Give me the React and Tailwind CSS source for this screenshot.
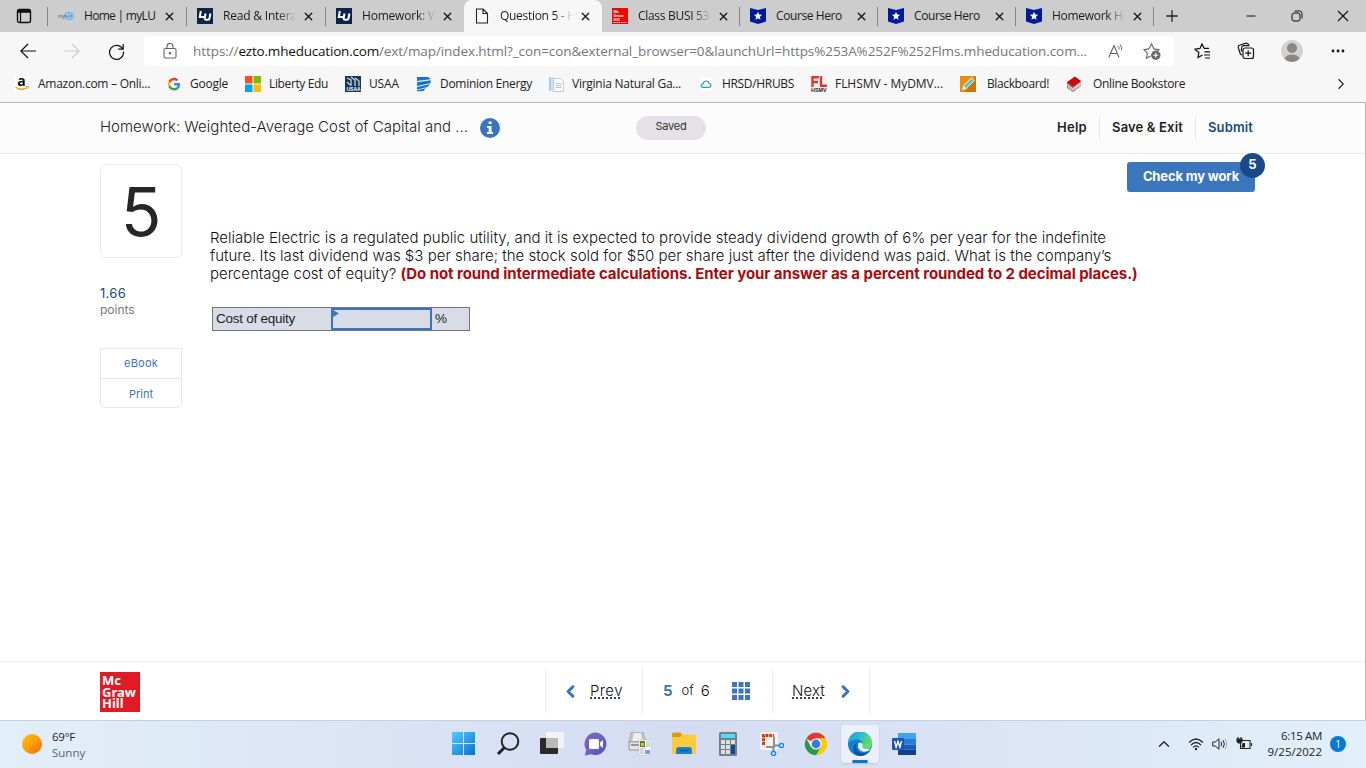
import React from "react";
import { X, Plus, Minus, ChevronRight, ChevronLeft, ChevronUp } from "lucide-react";

const tabs = [
  { title: "Home | myLU", icon: "mylu", width: "w-[139px]", text: "tracking-[-0.7px]", separator: true },
  { title: "Read & Intera", icon: "lu", width: "w-[139px]", text: "tracking-[-0.2px]", fade: true, separator: true },
  { title: "Homework: W", icon: "lu", width: "w-[138px]", text: "tracking-[-0.2px]", fade: true },
  { title: "Question 5 - H", icon: "page", width: "w-[138px]", text: "tracking-[-0.3px]", fade: true, active: true },
  { title: "Class BUSI 530", icon: "mgh", width: "w-[138px]", text: "tracking-[-0.3px]", fade: true, separator: true },
  { title: "Course Hero", icon: "hero", width: "w-[138px]", text: "tracking-[-0.4px]", separator: true },
  { title: "Course Hero", icon: "hero", width: "w-[138px]", text: "tracking-[-0.4px]", separator: true },
  { title: "Homework He", icon: "hero", width: "w-[138px]", text: "tracking-[-0.3px]", fade: true, separator: true },
];

const bookmarks = [
  { title: "Amazon.com – Onli...", icon: "amazon", width: "w-[152px] gap-2", text: "tracking-[-0.26px]" },
  { title: "Google", icon: "google", width: "w-[79px] gap-2", text: "tracking-[-0.24px]" },
  { title: "Liberty Edu", icon: "microsoft", width: "w-[100px] gap-2", text: "tracking-[-0.37px]" },
  { title: "USAA", icon: "usaa", width: "w-[71px] gap-2", text: "tracking-[-0.13px]" },
  { title: "Dominion Energy", icon: "dominion", width: "w-[132px] gap-2", text: "tracking-[-0.29px]" },
  { title: "Virginia Natural Ga...", icon: "vng", width: "w-[150px] gap-2", text: "tracking-[-0.26px]" },
  { title: "HRSD/HRUBS", icon: "cloud", width: "w-[113px] gap-2", text: "tracking-[-0.33px]" },
  { title: "FLHSMV - MyDMV...", icon: "fl", width: "w-[149px] gap-2", text: "tracking-[-0.05px]" },
  { title: "Blackboard!", icon: "pencil", width: "w-[106px] gap-[11px]", text: "tracking-[-0.38px]" },
  { title: "Online Bookstore", icon: "book", width: "w-[130px] gap-[11px]", text: "tracking-[-0.33px]" },
];

function SiteIcon({ name }) {
  switch (name) {
    case "mylu":
      return (
        <svg width="16" height="16" viewBox="0 0 16 16">
          <ellipse cx="11" cy="8" rx="4.7" ry="3.4" fill="#a9cdf0" stroke="#5b9bd8" strokeWidth="0.8" />
          <path d="M8 9V6.500M8 9h2M11 6.500v2q1.500 1.500 2.500 0v-2" fill="none" stroke="#3f86cc" strokeWidth="1" />
          <text x="0" y="10" fontSize="5" fontFamily="Liberation Sans, sans-serif" fill="#555">my</text>
        </svg>
      );
    case "lu":
      return (
        <svg width="16" height="16" viewBox="0 0 16 16">
          <rect width="16" height="16" fill="#0f2349" />
          <path d="M3.800 3L2.800 9H7.500M8.500 5.500L7.700 10q-.1 1.800 1.500 1.800h1.500q1.600 0 1.900-1.800l.8-4.500" fill="none" stroke="#fff" strokeWidth="2" />
        </svg>
      );
    case "page":
      return (
        <svg width="16" height="16" viewBox="0 0 16 16">
          <path d="M2.500 1v14h11V5.500L9 1zM9 1v4.500h4.500" fill="none" stroke="#222" strokeWidth="1.100" strokeLinejoin="round" />
        </svg>
      );
    case "mgh":
      return (
        <svg width="16" height="16" viewBox="0 0 16 16">
          <rect width="16" height="16" fill="#f00505" />
          <g fill="#fff" fontSize="4" fontWeight="700" fontFamily="Liberation Sans, sans-serif">
            <text x="1.500" y="4.500">Mc</text>
            <text x="1.500" y="8.500">Graw</text>
            <text x="1.500" y="12.500">Hill</text>
          </g>
          <path d="M1.500 14.500h13" stroke="#fff" strokeDasharray="1.200 .6" />
        </svg>
      );
    case "hero":
      return (
        <svg width="16" height="16" viewBox="0 0 16 16">
          <path d="M0 0l8 2 8-2v13.500L8 16 0 13.500z" fill="#001a9c" />
          <path d="M8 3.800l1.200 2.700 2.900.3-2.200 2 .6 2.900L8 10.200l-2.500 1.500.6-2.900-2.200-2 2.900-.3z" fill="#fff" />
        </svg>
      );
    case "amazon":
      return (
        <svg width="16" height="16" viewBox="0 0 16 16">
          <rect width="16" height="16" rx="2" fill="#fff" />
          <text x="3.300" y="10" fontSize="14" fontWeight="700" fontFamily="Open Sans, sans-serif" fill="#111">a</text>
          <path d="M1.500 11q6 4.500 11.500.5" fill="none" stroke="#f90" strokeWidth="1.500" />
          <path d="M11.500 10.500l3-.2-.7 2.700" fill="none" stroke="#f90" strokeWidth="1" />
        </svg>
      );
    case "google":
      return (
        <svg width="16" height="16" viewBox="0 0 48 48">
          <circle cx="24" cy="24" r="24" fill="#fff" />
          <g transform="translate(5 5) scale(.8)">
            <path fill="#EA4335" d="M24 9.500c3.540 0 6.710 1.220 9.210 3.600l6.850-6.850C35.900 2.380 30.470 0 24 0 14.620 0 6.510 5.380 2.560 13.220l7.980 6.190C12.430 13.720 17.740 9.500 24 9.500z" />
            <path fill="#4285F4" d="M46.980 24.550c0-1.570-.15-3.090-.38-4.550H24v9.020h12.940c-.58 2.960-2.260 5.480-4.780 7.180l7.730 6c4.510-4.180 7.090-10.360 7.090-17.650z" />
            <path fill="#FBBC05" d="M10.530 28.590c-.48-1.450-.76-2.990-.76-4.590s.27-3.140.76-4.590l-7.980-6.190C.92 16.460 0 20.120 0 24c0 3.880.92 7.540 2.560 10.780l7.970-6.190z" />
            <path fill="#34A853" d="M24 48c6.480 0 11.930-2.130 15.890-5.810l-7.730-6c-2.150 1.450-4.920 2.300-8.160 2.300-6.260 0-11.570-4.220-13.470-9.910l-7.980 6.190C6.510 42.620 14.620 48 24 48z" />
          </g>
        </svg>
      );
    case "microsoft":
      return (
        <svg width="16" height="16" viewBox="0 0 16 16">
          <path d="M0 0h7.500v7.500H0z" fill="#f25022" />
          <path d="M8.500 0H16v7.500H8.500z" fill="#7fba00" />
          <path d="M0 8.500h7.500V16H0z" fill="#00a4ef" />
          <path d="M8.500 8.500H16V16H8.500z" fill="#ffb900" />
        </svg>
      );
    case "usaa":
      return (
        <svg width="16" height="16" viewBox="0 0 16 16">
          <rect width="16" height="16" fill="#12395b" />
          <path d="M2 2l4 2v6M6 1l4 3v6M10 2l4 3v5M2 6l3 3" stroke="#c8d4de" strokeWidth="1.300" fill="none" />
          <text x="1.500" y="15" fontSize="5" fontWeight="700" fontFamily="Liberation Sans, sans-serif" fill="#fff">USAA</text>
        </svg>
      );
    case "dominion":
      return (
        <svg width="16" height="16" viewBox="0 0 16 16" fill="#1673d1">
          <path d="M1 1h11q2 1 2.500 2.300L1 5z" />
          <path d="M1 6.300l13.800-2q.2 1.800-.5 3L1 10z" />
          <path d="M1 11l12.800-2.800q-1 2-3 3L1 13.500z" />
          <path d="M1 14.300l9-2q-2 3-5 3H1z" />
        </svg>
      );
    case "vng":
      return (
        <svg width="16" height="16" viewBox="0 0 16 16">
          <path d="M1 1h6v14H1z" fill="#cfe6f7" />
          <path d="M1 1h2v14H1z" fill="#a5cdea" />
          <path d="M5.500 2.500h7l3 3v10h-10z" fill="#fff" stroke="#b5bcc4" strokeWidth=".8" />
          <path d="M7.500 7.500h6M7.500 9.500h6M7.500 11.500h6" stroke="#b2bac2" strokeWidth=".9" />
        </svg>
      );
    case "cloud":
      return (
        <svg width="16" height="16" viewBox="0 0 16 16">
          <rect x="2" y="2" width="12" height="12" fill="#fff" />
          <path d="M5 11.300q-2 0-2-1.700t2-1.800Q5.500 5 8 5t3 2.500q2 .3 2 2t-2 1.800z" fill="none" stroke="#2b9ab9" strokeWidth="1.200" />
        </svg>
      );
    case "fl":
      return (
        <svg width="16" height="16" viewBox="0 0 16 16">
          <path d="M1.500 11V1.200H8M1.500 6H7M10 0v9.800h6" fill="none" stroke="#d93a2b" strokeWidth="2.400" />
          <text x="0" y="16" fontSize="5.400" fontWeight="700" fontFamily="Liberation Sans, sans-serif" fill="#222">HSMV</text>
        </svg>
      );
    case "pencil":
      return (
        <svg width="16" height="16" viewBox="0 0 16 16">
          <rect width="16" height="16" fill="#f08a12" />
          <path d="M16 0v16H5z" fill="#cf7208" />
          <path d="M2.500 13.500l1-4 8-8 3 3-8 8z" fill="#7fd8d4" stroke="#fff" strokeWidth=".5" />
          <path d="M2.500 13.500l1-3.500L6 12.500z" fill="#fff3cf" />
          <path d="M5 11l7.500-7.500" stroke="#2e9d98" strokeWidth=".8" />
        </svg>
      );
    case "book":
      return (
        <svg width="16" height="16" viewBox="0 0 16 16">
          <path d="M1 8l7 4 7-5v3l-8 6-6-4z" fill="#8d8d8d" />
          <path d="M2 9l5 3.500L15 8M2 11l5 3 7.500-5" fill="none" stroke="#eee" strokeWidth=".9" />
          <path d="M1 6l8-5.500 6 4.500-8 6z" fill="#cc0c0c" />
          <path d="M1 6v1.300l6 4.500 8-6V5l-8 6z" fill="#a80808" />
        </svg>
      );
    default:
      return null;
  }
}

function TabStrip() {
  return (
    <div className="flex h-8 bg-[#cdcdcd]">
      <div className="flex w-12 items-center justify-end">
        <svg className="mr-[15px]" width="16" height="16" viewBox="0 0 16 16" fill="none" stroke="#111">
          <rect x="1.500" y="1.500" width="13" height="13" rx="2" strokeWidth="1.400" />
          <path d="M1.500 3.300h13" strokeWidth="3" />
          <path d="M4.500 4v10" strokeWidth="1.200" />
        </svg>
        <span className="h-[19px] w-px bg-[#858585]" />
      </div>
      {tabs.map((tab, index) => (
        <div
          key={index}
          className={`flex shrink-0 items-center pl-2.5 ${tab.width} ${
            tab.active ? "rounded-t-lg bg-[#f7f7f7]" : ""
          }`}
        >
          <span className="w-4 shrink-0">
            <SiteIcon name={tab.icon} />
          </span>
          <span
            className={`ml-2.5 w-[73px] overflow-hidden whitespace-nowrap text-xs text-[#1b1b1b] ${tab.text} ${
              tab.fade ? "[mask-image:linear-gradient(to_right,black_75%,transparent)]" : ""
            }`}
          >
            {tab.title}
          </span>
          <X className="ml-1.5 shrink-0 text-[#111]" size={13} strokeWidth={2.400} />
          {tab.separator && <span className="ml-auto h-[19px] w-px bg-[#858585]" />}
        </div>
      ))}
      <Plus className="ml-[9px] mt-[7px] text-[#222]" size={18} strokeWidth={1.700} />
      <div className="ml-auto flex items-center gap-[33px] pr-4 text-[#111]">
        <Minus size={14} strokeWidth={1.800} />
        <svg width="12" height="12" viewBox="0 0 12 12" fill="none" stroke="#111">
          <rect x="1" y="3" width="8" height="8" rx="2" />
          <path d="M3.500 1H8.500q2.500 0 2.500 2.500V8.500" />
        </svg>
        <svg width="14" height="14" viewBox="0 0 14 14" stroke="#111" strokeWidth="1.100">
          <path d="M2 2l10 10M12 2L2 12" />
        </svg>
      </div>
    </div>
  );
}

function AddressRow() {
  return (
    <div className="flex h-[38px] items-center">
      <svg className="ml-5" width="16" height="16" viewBox="0 0 16 16" fill="none" stroke="#111" strokeWidth="1.200">
        <path d="M16 8H.8M8 1L.8 8 8 15" />
      </svg>
      <svg className="ml-7" width="16" height="16" viewBox="0 0 16 16" fill="none" stroke="#ccc" strokeWidth="1.200">
        <path d="M0 8h15.200M8 1l7.200 7L8 15" />
      </svg>
      <svg className="ml-7" width="17" height="17" viewBox="0 0 17 17" fill="none" stroke="#111" strokeWidth="1.200">
        <path d="M14.800 6.200A7 7 0 1 0 15.500 8.500M15.200 1v5.200h-5" />
      </svg>
      <div className="ml-[19px] flex h-[30px] w-[1030px] items-center rounded bg-white">
        <svg className="ml-[19px]" width="14" height="16" viewBox="0 0 14 16" fill="none" stroke="#666" strokeWidth="1.100">
          <rect x="1" y="5.500" width="12" height="9.500" rx="1.500" />
          <path d="M4 5.500V3.500a3 3 0 0 1 6 0v2" />
          <circle cx="7" cy="10.200" r=".7" fill="#555" />
        </svg>
        <div className="ml-4 w-[900px] whitespace-nowrap text-[13.500px] text-[#767676]">
          <span className="tracking-[-0.07px]">https://</span>
          <span className="tracking-[-0.2px] text-[#111]">ezto.mheducation.com</span>
          <span className="tracking-[-0.09px]">/ext/map/index.html?_con=con&amp;external_browser=0&amp;launchUrl=https%253A%252F%252Flms.mheducation.com...</span>
        </div>
        <svg className="ml-[15px]" width="16" height="16" viewBox="0 0 16 16" fill="none" stroke="#666">
          <path d="M.8 14.500L6 2.500l5 12M2.500 10.500h7" strokeWidth="1.100" />
          <path d="M10 3q1.500 1.500 1 3.500M12 1.500q2.500 2.500 1.500 6" strokeWidth="1" />
        </svg>
        <svg className="ml-[19px]" width="18" height="18" viewBox="0 0 18 18" fill="none" stroke="#666">
          <path d="M7.500 14L3.500 16.200l.8-5L1 7.700l4.800-.8L8.500 2l2.500 4.900 5 .8-1.200 1.500" strokeWidth="1.100" />
          <circle cx="12.800" cy="13.200" r="4.700" fill="#666" stroke="none" />
          <path d="M12.800 10.700v5M10.300 13.200h5" stroke="#fff" strokeWidth="1.100" />
        </svg>
      </div>
      <svg className="ml-5" width="17" height="17" viewBox="0 0 17 17" fill="none" stroke="#111" strokeWidth="1.200">
        <path d="M8.500 12L4 14.500l.9-5L1 6.200l5-.8L7.900 1l2.300 4.400H15M10.500 8.800h5.500M10 12h6M11 15h5" />
      </svg>
      <svg className="ml-[26px]" width="18" height="18" viewBox="0 0 18 18" fill="none" stroke="#111" strokeWidth="1.200">
        <rect x="6" y="6" width="10.500" height="10.500" rx="2" />
        <path d="M11.200 8.200v6M8.200 11.200h6M5 13Q3.500 13 3 11L1.200 5.500Q1 3.500 3 3L9 1.200Q11 1 12 3.500M4.500 9.500V6q0-2 2-2.300h6" />
      </svg>
      <svg className="ml-[26px]" width="22" height="22" viewBox="0 0 22 22">
        <circle cx="11" cy="11" r="11" fill="#d4d2d0" />
        <circle cx="11" cy="8" r="5" fill="#8a8886" />
        <path d="M3.500 19q1-4.500 7.500-4.500t7.500 4.500a11 11 0 0 1-15 0z" fill="#8a8886" />
      </svg>
      <svg className="ml-7" width="14" height="4" viewBox="0 0 14 4" fill="#111">
        <circle cx="2" cy="2" r="1.400" />
        <circle cx="7" cy="2" r="1.400" />
        <circle cx="12" cy="2" r="1.400" />
      </svg>
    </div>
  );
}

function BookmarksBar() {
  return (
    <div className="flex h-[33px] items-center border-b border-[#b8b8b8] pb-1 pl-3.5">
      {bookmarks.map((item) => (
        <div key={item.title} className={`flex shrink-0 items-center ${item.width}`}>
          <SiteIcon name={item.icon} />
          <span className={`whitespace-nowrap text-xs text-[#222] ${item.text}`}>{item.title}</span>
        </div>
      ))}
      <ChevronRight className="ml-auto mr-4 text-[#222]" size={18} strokeWidth={1.500} />
    </div>
  );
}

function AssignmentHeader() {
  return (
    <header className="flex h-[51px] items-center border-b border-[#e8e8e8] bg-[#fcfcfc] pl-[100px] pb-px">
      <h1 className="w-[380px] whitespace-nowrap text-[15px] font-light tracking-[0.01px] text-[#222]">
        Homework: Weighted-Average Cost of Capital and ...
      </h1>
      <svg width="20" height="20" viewBox="0 0 20 20">
        <circle cx="10" cy="10" r="10" fill="#3a76bb" />
        <path d="M8.700 3.500h2.800V6H8.700zM7 8h4.500v6H13v2H7v-2h1.700v-4H7z" fill="#fff" />
      </svg>
      <div className="ml-[136px] flex h-6 w-[70px] items-center justify-center rounded-full bg-[#e4e2e6] pb-0.5 text-[11px] tracking-[-0.2px] text-[#333]">
        Saved
      </div>
      <nav className="ml-auto mr-[112px] flex items-center text-[13px] font-semibold text-[#1f1f1f]">
        <span className="tracking-[0.27px]">Help</span>
        <span className="ml-3 mr-3 h-5 w-px bg-[#e5e5e5]" />
        <span className="tracking-[0.16px]">Save &amp; Exit</span>
        <span className="ml-3 mr-3 h-5 w-px bg-[#e5e5e5]" />
        <span className="tracking-[0.13px] text-[#174a86]">Submit</span>
      </nav>
    </header>
  );
}

function Sidebar() {
  return (
    <aside className="w-[82px] pt-2.5 text-[#333]">
      <div className="flex h-[94px] items-center justify-center rounded-md border border-[#eaeaea] text-[67px] leading-none text-[#262626]">
        5
      </div>
      <div className="mt-[27px] text-[13px] leading-[17px] tracking-[0.29px] text-[#174a86]">1.66</div>
      <div className="text-xs leading-4 text-[#777]">points</div>
      <div className="mt-[30px] h-[60px] rounded-b-md border border-[#e6e6e6] text-center text-[11px] text-[#3a76bb]">
        <div className="flex h-[30px] items-center justify-center border-b border-[#e6e6e6] tracking-[0.23px]">eBook</div>
        <div className="flex h-[30px] items-center justify-center">Print</div>
      </div>
    </aside>
  );
}

function Question() {
  return (
    <section className="ml-7 w-[1045px]">
      <div className="flex h-[75px] justify-end pt-2">
        <button className="relative flex h-[30px] w-32 items-center justify-center rounded-[3px] bg-[#3a76bb] text-[13px] font-bold text-white">
          <span className="tracking-[-0.15px]">Check my work</span>
          <span className="absolute -right-2.5 -top-[9px] flex h-[25px] w-[25px] items-center justify-center rounded-full bg-[#174a86] pb-0.5">
            5
          </span>
        </button>
      </div>
      <p className="whitespace-nowrap text-[15px] font-light leading-[18px] text-[#111]">
        <span className="tracking-[0.024px]">
          Reliable Electric is a regulated public utility, and it is expected to provide steady dividend growth of 6% per year for the indefinite
        </span>
        <br />
        future. Its last dividend was $3 per share; the stock sold for $50 per share just after the dividend was paid. What is the company’s
        <br />
        percentage cost of equity?{" "}
        <span className="font-bold tracking-[-0.069px] text-[#a90b0f]">
          (Do not round intermediate calculations. Enter your answer as a percent rounded to 2 decimal places.)
        </span>
      </p>
      <div className="ml-0.5 mt-6 flex h-6 w-[258px] border border-[#757575] bg-[#d8dce6] font-['Liberation_Sans',Arial,sans-serif] text-[13.500px] text-[#222]">
        <div className="flex w-[118px] items-center pl-[3px] tracking-[-0.25px]">Cost of equity</div>
        <div className="w-[101px] border-2 border-[#3a76bb]">
          <svg width="6" height="7" viewBox="0 0 6 7">
            <path d="M0 0l6 3.500L0 7z" fill="#3a76bb" />
          </svg>
        </div>
        <div className="flex items-center pl-[3px]">%</div>
      </div>
    </section>
  );
}

function Pager() {
  return (
    <footer className="flex h-[59px] border-t border-[#eee] pl-[100px]">
      <div className="mt-2.5 h-10 w-10 bg-[#e21a23] pl-[2px] pt-[3px] font-['Noto_Sans','Open_Sans',sans-serif] text-[13px] font-bold leading-[11.500px] text-white">
        <div>Mc</div>
        <div>Graw</div>
        <div>Hill</div>
      </div>
      <div className="ml-[405px] mt-1.5 flex h-[46px] text-[15px] font-light text-[#111]">
        <div className="flex w-[97px] items-center border-l border-[#eee] pl-[15px]">
          <ChevronLeft size={19} strokeWidth={4} className="text-[#3a76bb]" />
          <span className="ml-2.5 tracking-[0.4px] underline decoration-[#444] decoration-dotted decoration-2 underline-offset-2">Prev</span>
        </div>
        <div className="flex w-[130px] items-center border-l border-[#eee] pl-5">
          <b className="font-bold text-[#3a76bb]">5</b>
          <span className="ml-[9px] text-[13px]">of</span>
          <span className="ml-[7px]">6</span>
          <svg className="ml-[22px]" width="18" height="18" viewBox="0 0 18 18" fill="#3a76bb">
            <path d="M0 0h5v5H0zM6.500 0h5v5h-5zM13 0h5v5h-5zM0 6.500h5v5H0zM6.500 6.500h5v5h-5zM13 6.500h5v5h-5zM0 13h5v5H0zM6.500 13h5v5h-5zM13 13h5v5h-5z" />
          </svg>
        </div>
        <div className="flex w-[98px] items-center border-x border-[#eee] pl-[19px]">
          <span className="mr-[11px] tracking-[0.14px] underline decoration-[#444] decoration-dotted decoration-2 underline-offset-2">Next</span>
          <ChevronRight size={19} strokeWidth={4} className="text-[#3a76bb]" />
        </div>
      </div>
    </footer>
  );
}

const apps = ["start", "search", "taskview", "chat", "scanner", "files", "calculator", "snip", "chrome", "edge", "word"];

function AppIcon({ name }) {
  return (
    <svg width="24" height="24" viewBox="0 0 24 24">
      {name === "start" && (
        <>
          <defs>
            <linearGradient id="start" x1="0" y1="0" x2="1" y2="1">
              <stop offset="0" stopColor="#4fd0fb" />
              <stop offset="1" stopColor="#0670cf" />
            </linearGradient>
          </defs>
          <path d="M0 0h11v11H0zM12 0h11v11H12zM0 12h11v11H0zM12 12h11v11H12z" fill="url(#start)" />
        </>
      )}
      {name === "search" && (
        <g fill="none" stroke="#222">
          <circle cx="14" cy="9.500" r="8.300" strokeWidth="2" />
          <path d="M8.500 15.500L2 22" strokeWidth="3" />
        </g>
      )}
      {name === "taskview" && (
        <>
          <rect x="0" y="6" width="18" height="16" rx="1" fill="#2b2b2b" />
          <rect x="6" y="0" width="18" height="16" rx="1" fill="#f3f3f3" />
          <path d="M6 6h12v10H6z" fill="#b9b9b9" />
        </>
      )}
      {name === "chat" && (
        <>
          <defs>
            <linearGradient id="chat" x1="0" y1="0" x2="1" y2="1">
              <stop offset="0" stopColor="#8a63a8" />
              <stop offset=".5" stopColor="#6a63c6" />
              <stop offset="1" stopColor="#4a4fc0" />
            </linearGradient>
          </defs>
          <path d="M12 .5A11.300 11.300 0 1 1 7 22.300L.8 23.500 2.200 18A11.500 11.500 0 0 1 12 .5z" fill="url(#chat)" />
          <rect x="5" y="7" width="10" height="10" rx="1.500" fill="#fff" />
          <path d="M16 10.500L19 8v8l-3-2.500z" fill="#fff" />
        </>
      )}
      {name === "scanner" && (
        <>
          <path d="M3 0h12l3 10H1z" fill="#c4c4c2" stroke="#999" strokeWidth=".6" />
          <path d="M6 1h7l1 8H4z" fill="#eee" />
          <path d="M1 10h17v8H1z" fill="#e6e4e0" stroke="#8e8c88" strokeWidth=".9" />
          <path d="M3 13h10" stroke="#444" />
          <path d="M11 8h12v15H11z" fill="#fff" stroke="#a8b4bf" strokeWidth=".5" />
          <path d="M12 9h5v6h-5z" fill="#458836" />
          <path d="M13 11h3v3h-3z" fill="#e8b632" />
          <path d="M18 10h4M18 12h4M18 14h4M12 17h5M12 19h4M12 21h4" stroke="#999" strokeWidth=".8" />
          <path d="M17 18h5v4h-5z" fill="#69a5dd" />
        </>
      )}
      {name === "files" && (
        <>
          <path d="M0 2q0-1.500 1.500-1.500H8L11 3v5H0z" fill="#dd9b08" />
          <path d="M0 5h8l2-2.500h14V22H0z" fill="#ffca3c" />
          <path d="M4 22v-4q0-3 3-3h10q3 0 3 3v4z" fill="#1683d2" />
          <path d="M8 18.500h8" stroke="#0b579e" strokeWidth="1.500" strokeLinecap="round" />
        </>
      )}
      {name === "calculator" && (
        <>
          <rect x="3" y="0" width="18" height="24" rx="1.500" fill="#74818c" />
          <path d="M5 2h14v4H5z" fill="#4edcf9" />
          <path d="M5 8h4v4H5zM10 8h4v4h-4zM15 8h4v4h-4zM5 13h4v4H5zM10 13h4v4h-4zM5 18h4v4H5zM10 18h4v4h-4z" fill="#d9e0e4" />
          <path d="M15 13h4v9h-4z" fill="#0b4a8d" />
        </>
      )}
      {name === "snip" && (
        <>
          <rect x="0" y="0" width="18" height="18" rx="2" fill="#f3f3f3" />
          <path d="M3.500 13V3.500H14" fill="none" stroke="#d83b01" strokeWidth="3" strokeDasharray="3 .8" />
          <path d="M14 5v10H6M14 13.500h6M13.500 14v6" fill="none" stroke="#8b9195" strokeWidth="2" />
          <circle cx="21.500" cy="13.500" r="2" fill="#fff" stroke="#1490df" strokeWidth="1.600" />
          <circle cx="13.500" cy="21.500" r="2" fill="#fff" stroke="#1490df" strokeWidth="1.600" />
        </>
      )}
      {name === "chrome" && (
        <>
          <path d="M12 12L2.300 6.400A11.200 11.200 0 0 1 21.700 6.400H12z" fill="#df3b30" />
          <path d="M12 6.400h9.700A11.200 11.200 0 0 1 12 23.200L17 15z" fill="#fdcb0a" />
          <path d="M2.300 6.400A11.200 11.200 0 0 0 12 23.200L17 15 12 12 7 15z" fill="#29994a" />
          <circle cx="12" cy="12" r="5.600" fill="#fff" />
          <circle cx="12" cy="12" r="4.400" fill="#347be8" />
        </>
      )}
      {name === "edge" && (
        <>
          <defs>
            <linearGradient id="edgeTop" x1="0" y1="0" x2="1" y2=".4">
              <stop offset="0" stopColor="#1598df" />
              <stop offset=".5" stopColor="#29bfd1" />
              <stop offset="1" stopColor="#66dc5f" />
            </linearGradient>
          </defs>
          <circle cx="12" cy="12" r="12" fill="#0f7fd6" />
          <path d="M0 11A12 12 0 0 1 24 11.500Q23.500 17 18 17q-4-.3-3.500-2.500Q16 12 14 9.500 9 4.500 0 11z" fill="url(#edgeTop)" />
          <path d="M9 11q-3 6 2.500 9.500 5 2 10.500-1.500Q18 24 12 24 5 23 5.500 16 6 12.500 9 11z" fill="#0b559f" />
          <path d="M10 11.500q2.500-2 4.500 0 .8 1.500 0 3 .5 2.700 5 2.500 2-.2 3.300-.8-3 3.800-7.500 3.500-6-1-5.300-8.200z" fill="#f2f4fa" />
        </>
      )}
      {name === "word" && (
        <>
          <path d="M6 1h18v6H6z" fill="#41a5ee" />
          <path d="M6 7h18v5.500H6z" fill="#2b7cd3" />
          <path d="M6 12.500h18v5H6z" fill="#185abd" />
          <path d="M6 17.500h18V23H6z" fill="#103f91" />
          <rect x="0" y="6" width="12" height="12" rx="1" fill="#1b56b3" />
          <path d="M2.500 9l1.600 6L6 9.500 7.900 15l1.600-6" fill="none" stroke="#fff" strokeWidth="1.400" />
        </>
      )}
    </svg>
  );
}

function Taskbar() {
  return (
    <div className="flex h-12 items-center border-t border-[#c6d1e2] bg-linear-to-r from-[#e2eef8] via-[#d5dcf2] to-[#e2eff9] pb-px">
      <div className="flex w-[442px] items-center pl-[22px]">
        <span className="h-5 w-5 rounded-full bg-linear-to-br from-[#ffc905] to-[#ee6d0a]" />
        <div className="ml-[10px] pt-0.5 text-[11.500px] leading-4">
          <div className="tracking-[-0.25px] text-[#222]">69°F</div>
          <div className="text-[#5d6268]">Sunny</div>
        </div>
      </div>
      <div className="flex">
        {apps.map((name) => (
          <div key={name} className="flex w-11 justify-center">
            <div
              className={`relative flex h-[38px] w-[38px] items-center justify-center rounded ${
                name === "edge" ? "bg-[#edf0fa] shadow-sm" : ""
              }`}
            >
              <AppIcon name={name} />
              {name === "edge" && (
                <span className="absolute bottom-0 h-[3px] w-4 rounded-full bg-[#0878d3]" />
              )}
            </div>
          </div>
        ))}
      </div>
      <div className="flex flex-1 items-center justify-end pr-5 text-[#222]">
        <ChevronUp size={18} strokeWidth={1.800} />
        <svg className="ml-[15px]" width="16" height="14" viewBox="0 0 16 14" fill="none" stroke="#222" strokeWidth="1.200">
          <path d="M1 5.500q7-7 14 0M3 8q5-5 10 0M5 10.300q3-3 6 0" />
          <circle cx="8" cy="12" r="1.200" fill="#222" stroke="none" />
        </svg>
        <svg className="ml-2" width="16" height="14" viewBox="0 0 16 14" fill="none" stroke="#222">
          <path d="M.7 5h2.500L7 1.800v10.400L3.200 9H.7z" />
          <path d="M9 4.800q1.500 2.200 0 4.400M11 3.200q2.800 3.800 0 7.600" />
          <path d="M13 1.800q3.500 5.200 0 10.400" stroke="#aaa" />
        </svg>
        <svg className="ml-2" width="17" height="14" viewBox="0 0 17 14" fill="none" stroke="#222" strokeWidth="1.100">
          <path d="M6 3.500h8v8H4.500V6M15.500 6v3" />
          <path d="M1 2h5v2.500L4.500 6h-2L1 4.500zM2 0v2M5 0v2" fill="#222" />
          <path d="M6.500 6H9v4.500H5.500z" fill="#222" stroke="none" />
        </svg>
        <div className="ml-[15px] text-right text-[11.500px] leading-4">
          <div className="tracking-[-0.33px]">6:15 AM</div>
          <div>9/25/2022</div>
        </div>
        <span className="ml-2 flex h-4 w-4 items-center justify-center rounded-full bg-[#0878d3] text-[10px] text-white">1</span>
      </div>
    </div>
  );
}

export default function App() {
  return (
    <div className="flex h-screen w-full flex-col overflow-hidden bg-white font-['Open_Sans','Noto_Sans',sans-serif]">
      <div className="bg-[#f7f7f7]">
        <TabStrip />
        <AddressRow />
        <BookmarksBar />
      </div>
      <main className="flex min-h-0 flex-1 flex-col border-r border-[#b8b8b8] font-['Inter','Lato',sans-serif]">
        <AssignmentHeader />
        <div className="flex min-h-0 flex-1 pl-[100px]">
          <Sidebar />
          <Question />
        </div>
        <Pager />
      </main>
      <Taskbar />
    </div>
  );
}
